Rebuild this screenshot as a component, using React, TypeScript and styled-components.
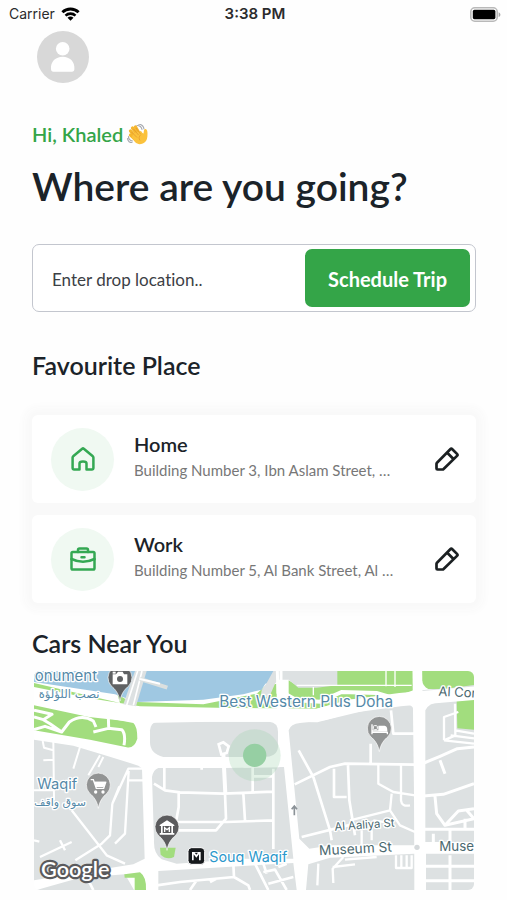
import React from "react";
import styled, { createGlobalStyle } from "styled-components";

const GlobalStyle = createGlobalStyle`
  *, *::before, *::after { box-sizing: border-box; }
  body {
    margin: 0;
    background: #fefefe;
    color: #1b2329;
    font-family: Lato, "Liberation Sans", sans-serif;
    font-variant-ligatures: no-common-ligatures;
  }
  h1, h2, h3, p, ul { margin: 0; padding: 0; }
  button, input { font-family: inherit; font-variant-ligatures: inherit; }
`;

const Screen = styled.div`
  min-height: 100vh;
`;

const StatusBar = styled.header`
  display: grid;
  grid-template-columns: 1fr auto 1fr;
  align-items: center;
  height: 28px;
  padding: 0 6px 0 9px;
  font: 400 14px/20px Inter, Roboto, sans-serif;
  color: #2b2b2d;
`;

const StatusGroup = styled.div<{ $end?: boolean }>`
  display: flex;
  align-items: center;
  justify-content: ${(p) => (p.$end ? "flex-end" : "flex-start")};
  gap: 6px;
`;

const Clock = styled.time`
  font-size: 15px;
  font-weight: 600;
`;

const Content = styled.main`
  display: flex;
  flex-direction: column;
  padding: 3px 31px 8px 32px;
`;

const AvatarButton = styled.button`
  align-self: flex-start;
  display: block;
  width: 52px;
  height: 52px;
  margin-left: 5px;
  padding: 0;
  border: 0;
  border-radius: 50%;
  background: #d8d8d8;
  cursor: pointer;
`;

const Greeting = styled.p`
  display: flex;
  align-items: center;
  gap: 4px;
  margin-top: 39px;
  font-size: 20px;
  font-weight: 600;
  line-height: 24px;
  color: #34a548;
`;

const Headline = styled.h1`
  margin-top: 16px;
  font-size: 39px;
  font-weight: 600;
  line-height: 48px;
`;

const SearchForm = styled.form`
  display: flex;
  align-items: stretch;
  height: 68px;
  margin-top: 34px;
  padding: 4px 5px 4px 0;
  border: 1px solid #c3c6ce;
  border-radius: 7px;
  background: #fff;
`;

const DropInput = styled.input`
  flex: 1;
  min-width: 0;
  padding: 2px 20px 0 19px;
  border: 0;
  outline: 0;
  background: transparent;
  font-size: 17px;
  color: #1b2329;
  &::placeholder { color: #3c4045; opacity: 1; }
`;

const TripButton = styled.button`
  flex: none;
  padding: 2px 23px 0;
  border: 0;
  border-radius: 7px;
  background: #34a548;
  color: #fff;
  font-size: 20px;
  font-weight: 700;
  cursor: pointer;
`;

const SectionTitle = styled.h2<{ $top: number }>`
  margin-top: ${(p) => p.$top}px;
  font-size: 25px;
  font-weight: 600;
  line-height: 28px;
`;

const PlaceList = styled.ul`
  display: flex;
  flex-direction: column;
  gap: 12px;
  margin-top: 36px;
  border-radius: 6px;
  list-style: none;
  background: #f9f9f9;
  box-shadow: 0 0 8px 8px #f9f9f9;
`;

const PlaceCard = styled.li`
  display: flex;
  align-items: center;
  height: 88px;
  padding: 0 15px 0 19px;
  border-radius: 6px;
  background: #fff;
`;

const PlaceBadge = styled.span`
  flex: none;
  display: grid;
  place-items: center;
  width: 63px;
  height: 63px;
  border-radius: 50%;
  background: #f0f9f2;
`;

const PlaceText = styled.div`
  flex: 1;
  min-width: 0;
  margin: 0 24px 0 20px;
  padding-bottom: 6px;
`;

const PlaceName = styled.h3`
  font-size: 20px;
  font-weight: 600;
  line-height: 28px;
`;

const PlaceAddress = styled.p`
  font-size: 15px;
  line-height: 24px;
  color: #777;
  white-space: nowrap;
  overflow: hidden;
  text-overflow: ellipsis;
`;

const EditButton = styled.button`
  flex: none;
  display: grid;
  place-items: center;
  width: 28px;
  height: 28px;
  padding: 0;
  border: 0;
  background: transparent;
  color: #1b2022;
  cursor: pointer;
`;

const MapFrame = styled.div`
  margin: 14px 2px 0;
  border-radius: 6px;
  overflow: hidden;
  background: #fff;
`;

const MapDrawing = styled.svg`
  display: block;
  width: 100%;
  height: auto;
  font-family: Inter, Roboto, sans-serif;
`;

const MapLabel = styled.text<{ $tone?: "place" | "street" | "transit" }>`
  fill: ${(p) =>
    p.$tone === "street" ? "#4b6970" : p.$tone === "transit" ? "#2b98cc" : "#5489a8"};
  stroke: #fff;
  stroke-width: 8px;
  stroke-linejoin: round;
  paint-order: stroke;
`;

const WifiIcon = () => (
  <svg width="19" height="14" viewBox="0 0 19 14" aria-label="Wi-Fi">
    <path d="M1.4 5.2a11.7 11.7 0 0 1 16.2 0" fill="none" stroke="#000" strokeWidth="2.9" />
    <path d="M4.5 8.6a7.3 7.3 0 0 1 10 0" fill="none" stroke="#000" strokeWidth="2.6" />
    <path d="M9.5 13.8 6.5 10.8a4.4 4.4 0 0 1 6 0Z" fill="#000" />
  </svg>
);

const BatteryIcon = () => (
  <svg width="31" height="15" viewBox="0 0 31 15" aria-label="Battery full">
    <rect x="0.8" y="0.8" width="26.4" height="13.4" rx="4" fill="#fff" stroke="#b9b9b9" strokeWidth="1.6" />
    <rect x="2.8" y="2.8" width="22.6" height="9.4" rx="1.6" fill="#000" />
    <path d="M28.6 5.2c2.4.8 2.4 4 0 4.8Z" fill="#a9a9a9" />
  </svg>
);

const PersonIcon = () => (
  <svg width="52" height="52" viewBox="0 0 52 52" aria-hidden="true">
    <circle cx="25.7" cy="17.8" r="6.8" fill="#fff" />
    <path d="M14 38c-.6-7.400 4.600-12.300 11.700-12.300S38 30.600 37.400 38c-.1 2-.9 2.700-2.400 2.700H16.400c-1.500 0-2.300-.7-2.400-2.700Z" fill="#fff" />
  </svg>
);

const WaveIcon = () => (
  <svg width="21" height="21" viewBox="0 0 42 42" role="img" aria-label="Waving hand">
    <path d="M20 3c5 0 9 3 10 8M23 0c7 1 10 4 11 10M3 25c0 5 3 8 8 9M1 29c1 5 4 8 9 8" fill="none" stroke="#a6a9af" strokeWidth="2.300" strokeLinecap="round" />
    <g stroke="#f5b62e" strokeLinecap="round" strokeWidth="6.500">
      <path d="M22 23 11 8" /><path d="M25 20 17 6" /><path d="M18 27 7 14" /><path d="M17 31 7 22" />
    </g>
    <path d="M14 18 28 14c2 3 3 5 5 5 1-4 0-8 3-9 4-1 5 4 5 9 0 9-1 14-6 18-7 5-14 4-19-1L9 27Z" fill="#fbc23c" />
    <path d="M13 10 23 22M18 8l9 12M9 16l11 11" stroke="#dd922c" strokeWidth="1.300" />
    <path d="M28 21c-4 3-5 8-2 12" fill="none" stroke="#e59c2c" strokeWidth="1.500" />
  </svg>
);

const HomeIcon = () => (
  <svg width="24" height="24" viewBox="0 0 24 24" fill="none" stroke="#34a853" strokeWidth="2.500" strokeLinejoin="round" strokeLinecap="round" aria-hidden="true">
    <path d="M1.600 10.600Q1.600 9.900 2.200 9.300L11.200 1.700Q12 1.100 12.800 1.700L21.800 9.300Q22.400 9.900 22.400 10.600V21.200Q22.400 22.400 21.200 22.400H15.500V16.500Q15.500 14.500 12 14.500T8.500 16.500V22.400H2.800Q1.600 22.400 1.600 21.200Z" />
  </svg>
);

const WorkIcon = () => (
  <svg width="26" height="24" viewBox="0 0 26 24" fill="none" stroke="#34a853" strokeWidth="2.500" strokeLinejoin="round" strokeLinecap="round" aria-hidden="true">
    <rect x="1.500" y="5" width="23" height="17.500" rx="1.300" />
    <path d="M8 5V3Q8 1.500 9.500 1.500H16.500Q18 1.500 18 3V5M1.500 12Q13 17.500 24.500 12M11.500 10.300H14.500" />
  </svg>
);

const PencilIcon = () => (
  <svg width="24" height="24" viewBox="0 0 24 24" fill="none" stroke="currentColor" strokeWidth="2.700" strokeLinejoin="round" aria-hidden="true">
    <path d="M1.500 16.800Q1.500 16.200 2 15.700L15.300 2.200Q16.300 1.200 17.300 2.200L22 6.900Q23 7.900 22 8.900L8.600 22Q8.100 22.500 7.500 22.500H2.500Q1.500 22.500 1.500 21.500ZM12 5.500 18.700 12.200" />
  </svg>
);

const MapPin = ({ x, y, color, children }: { x: number; y: number; color: string; children: React.ReactNode }) => (
  <g transform={`translate(${x} ${y})`}>
    <path d="M0 68C-4 45-14 33-27 22A36 36 0 1 1 27 22C14 33 4 45 0 68Z" fill={color} stroke="#fff" strokeWidth="2" />
    {children}
  </g>
);

/* Filled city blocks; the streets are the white gaps and strokes between them. */
const BLOCKS = [
  "M12 218 130 236 215 262 300 288 325 296 336 304 344 575 310 592 240 603 12 640Z",
  "M20 669 70 655 150 632 285 622 312 669Z",
  "M380 164H718Q744 166 744 195V240Q742 270 700 270H400Q360 260 360 225V190Q362 168 380 164Z",
  "M385 303H585L762 300 790 575 640 575 440 590 395 577Q370 560 372 520L366 330Q370 308 385 303Z",
  "M385 612 450 608 790 588 800 669H385Z",
  "M776 190Q782 170 810 168L885 160 1040 122 1105 112Q1145 105 1153 130V535H905L838 545 808 515Z",
  "M835 592 900 572 1153 560V669H828Z",
  "M1186 130Q1196 108 1230 106L1332 90V525H1186Z",
  "M1188 560H1332V669H1188Z",
  "M1176 70 1332 52V90L1186 104Z",
];

const PARKS = [
  "M12 48 270 108 262 82 300 104 520 112 680 80 705 58 740 50V125L690 125 330 118 180 94 12 60Z",
  "M12 110 310 168Q322 178 322 215Q312 246 290 241L180 218 12 190Z",
  "M776 40 800 55H920V12H1150V70L1110 84 960 98 860 125H776Z",
  "M1176 12H1332V54L1240 66H1195Q1178 58 1176 40Z",
  "M1280 102 1332 96V188L1282 184Z",
  "M390 542 437 542 432 570Q410 580 392 563Z",
  "M283 622 330 616Q350 630 348 669H314V632L284 632Z",
];

const ROADS: [number, string][] = [
  [9, "M12 150 40 158 60 170 95 195 118 165Q155 140 190 162L198 180M40 158 66 142 12 130M12 188 45 178 95 195M235 150 236 180M190 195 235 184 275 188Q288 200 282 235"],
  [6, "M38 222 42 242 70 250M70 225 72 400M150 240 130 305M40 280 72 278M210 265 175 325M12 370H72M220 270 205 300"],
  [7, "M125 430 230 565 285 590M125 525 30 570M12 520 28 524M90 520 105 550M136 580 215 530 240 505 247 410 295 305H340M292 340H342M296 312 285 500 255 530M247 410 268 358"],
  [8, "M403 302V370M372 350 405 370 450 376 580 380 730 374M446 376V420L438 465M585 380 588 455 558 490H442M440 465H590L732 460M640 380 645 460M730 305V546M668 300V376M668 328H728M515 296V308"],
  [12, "M580 260 586 380M388 288 585 295M748 295 640 296"],
  [8, "M794 352 900 300 945 290 1155 293M1022 230V290M1083 130 1090 200H1155M912 305V390H950M954 295 958 400 975 505M850 330 806 250M850 330 900 490 905 520M815 510 975 470"],
  [7, "M1045 293V350L1090 375 1155 385M1113 293V400Q1115 420 1140 415M1085 380 1080 430 960 460M1080 430 1110 475 1155 495M995 490V535M1030 460 1090 470"],
  [9, "M1182 288 1230 268 1282 245 1332 240M1180 387 1240 382 1332 350M1215 388 1220 440 1245 475 1332 455M1182 487H1332M1230 280 1245 320M1245 475 1285 432 1332 425M1310 430 1332 455M1260 487V535M1305 455V490"],
  [7, "M1242 220V150L1285 135M1275 110 1276 205L1242 220M1242 220 1332 230M1275 190 1332 200M1262 205 1332 214"],
  [9, "M1182 598H1332M1182 641H1332M1260 565V669M1210 500V530"],
  [7, "M1098 565V603H1145V565M1114 565V603M1130 565V603M940 570 908 605 910 648M908 600 975 592M945 578 1040 570M865 590 862 655M1025 520V490"],
  [8, "M610 590 612 630 450 645 380 655M612 630 655 655 660 669M675 590 715 669M700 615 735 608 770 669M715 650 790 630M745 600 770 590M500 640 480 669M560 635 540 645M170 630 190 669M700 590 710 620"],
  [4, "M800 55H1145M1068 12V58M1095 12V60M850 60V85"],
];

const CityMap = () => (
  <MapDrawing viewBox="12 12 1320 657" role="img" aria-label="Map of cars near Souq Waqif">
    <rect x="12" y="12" width="1320" height="657" fill="#fff" />
    {BLOCKS.map((d) => <path key={d} d={d} fill="#dde1e2" />)}
    {PARKS.map((d) => <path key={d} d={d} fill="#a2dd7e" />)}
    <path d="M12 12H740V44L706 50 695 68 640 82 520 98 320 105 255 82 12 45Z" fill="#9fc8e2" />
    <path d="M315 12H350L318 118 280 112Z" fill="#dde1e2" />
    <path d="M730 12H922V55L860 62H805L776 38H745L735 50 720 85 690 100 695 70 710 48Z" fill="#dde1e2" />
    <path d="M323 12 290 115M336 12 310 115" stroke="#fff" strokeWidth="5" />
    <path d="M330 36 412 62" stroke="#dbe0df" strokeWidth="12" />
    <path d="M330 36 390 50" stroke="#fff" strokeWidth="6" />
    <path d="M12 94 180 130 340 148 540 144 750 144 860 146 960 118 1110 98 1340 78" fill="none" stroke="#fff" strokeWidth="40" />
    <path d="M753 12V160M742 12 744 80" stroke="#fff" strokeWidth="9" />
    <path d="M765 80 800 100 870 104 935 75 1040 78 1080 90" fill="none" stroke="#fff" strokeWidth="12" />
    <path d="M1162 12 1170 669" stroke="#fff" strokeWidth="29" />
    <g fill="none" stroke="#fff" strokeLinejoin="round">
      {ROADS.map(([width, d]) => <path key={d} d={d} strokeWidth={width} />)}
    </g>
    <path d="M566 232 580 226 596 238 590 258 574 262Z" fill="#dde1e2" stroke="#fff" strokeWidth="8" />
    <circle cx="1161" cy="541" r="8" fill="#d5d9db" />
    <path d="M793 445V419M785 427 793 417 801 427" fill="none" stroke="#8b9297" strokeWidth="5" />
    <circle cx="674" cy="265" r="78" fill="#9bd0a8" fillOpacity="0.280" />
    <circle cx="674" cy="265" r="35" fill="#96cfa3" />

    <MapLabel x="14" y="41" fontSize="45">onument</MapLabel>
    <MapLabel x="26" y="92" fontSize="35" fontFamily="DejaVu Sans">نصب اللؤلؤة</MapLabel>
    <MapLabel x="568" y="121" fontSize="46">Best Western Plus Doha</MapLabel>
    <MapLabel x="22" y="367" fontSize="44">Waqif</MapLabel>
    <MapLabel x="12" y="418" fontSize="33" fontFamily="DejaVu Sans">سوق واقف</MapLabel>
    <MapLabel $tone="transit" x="538" y="584" fontSize="43">Souq Waqif</MapLabel>
    <MapLabel $tone="street" x="1225" y="86" fontSize="39" transform="rotate(3 1225 86)">Al Cor</MapLabel>
    <MapLabel $tone="street" x="914" y="491" fontSize="34" transform="rotate(-4 914 491)">Al Aaliya St</MapLabel>
    <MapLabel $tone="street" x="868" y="565" fontSize="41" transform="rotate(-3 868 565)">Museum St</MapLabel>
    <MapLabel $tone="street" x="1228" y="551" fontSize="40">Muse</MapLabel>

    <MapPin x={270} y={34} color="#5f6163">
      <path d="M-22-12H-12L-6-20H8L12-12H22V18H-22Z" fill="#fff" />
      <circle cx="0" cy="2" r="9" fill="#5f6163" />
      <rect x="-22" y="-20" width="9" height="6" fill="#fff" />
    </MapPin>
    <MapPin x={1048} y={186} color="#929494">
      <path d="M-22-14V16M-22 10H24V16" fill="none" stroke="#fff" strokeWidth="4" />
      <rect x="-18" y="-10" width="12" height="12" rx="3" fill="none" stroke="#fff" strokeWidth="3" />
      <path d="M-3 4V-10H16Q24-9 24 4V8H-22V4Z" fill="#fff" />
    </MapPin>
    <MapPin x={205} y={356} color="#929494">
      <path d="M-23-18H-15L-6 8H16L22-10H-12" fill="none" stroke="#fff" strokeWidth="4" />
      <path d="M-12-12H23L16 4H-7Z" fill="#fff" />
      <circle cx="-8" cy="19" r="5" fill="#fff" /><circle cx="14" cy="19" r="5" fill="#fff" />
    </MapPin>
    <MapPin x={411} y={482} color="#5b5b5d">
      <path d="M-22-8 0-22 22-8V-5H-22ZM-18-5H-13V16H-18ZM13-5H18V16H13ZM-22 16H22V21H-22Z" fill="#fff" />
      <path d="M-7 13V0L0 6 7 0V13" fill="none" stroke="#fff" strokeWidth="4" />
    </MapPin>
    <rect x="474" y="542" width="50" height="50" rx="11" fill="#16191c" stroke="#fff" strokeWidth="3" />
    <path d="M486 580V555H512V580H507V562L499 572 491 562V580Z" fill="#fff" />
    <path d="M494 557 499 563 504 557" fill="#16191c" />
    <text x="33" y="629" fontSize="65" fontFamily="Lato" fontWeight="600" fill="#fff" stroke="#5a5a5c" strokeWidth="13" strokeLinejoin="round" paintOrder="stroke">Google</text>
  </MapDrawing>
);

const places = [
  { name: "Home", address: "Building Number 3, Ibn Aslam Street, …", icon: <HomeIcon /> },
  { name: "Work", address: "Building Number 5, Al Bank Street, Al …", icon: <WorkIcon /> },
];

export default function App() {
  return (
    <Screen>
      <GlobalStyle />
      <StatusBar>
        <StatusGroup>Carrier <WifiIcon /></StatusGroup>
        <Clock>3:38 PM</Clock>
        <StatusGroup $end><BatteryIcon /></StatusGroup>
      </StatusBar>
      <Content>
        <AvatarButton type="button" aria-label="Profile"><PersonIcon /></AvatarButton>
        <Greeting>Hi, Khaled <WaveIcon /></Greeting>
        <Headline>Where are you going?</Headline>
        <SearchForm onSubmit={(e) => e.preventDefault()}>
          <DropInput type="text" aria-label="Drop location" placeholder="Enter drop location.." />
          <TripButton type="submit">Schedule Trip</TripButton>
        </SearchForm>
        <SectionTitle $top={39}>Favourite Place</SectionTitle>
        <PlaceList>
          {places.map((place) => (
            <PlaceCard key={place.name}>
              <PlaceBadge>{place.icon}</PlaceBadge>
              <PlaceText>
                <PlaceName>{place.name}</PlaceName>
                <PlaceAddress>{place.address}</PlaceAddress>
              </PlaceText>
              <EditButton type="button" aria-label={`Edit ${place.name}`}><PencilIcon /></EditButton>
            </PlaceCard>
          ))}
        </PlaceList>
        <SectionTitle $top={26}>Cars Near You</SectionTitle>
        <MapFrame><CityMap /></MapFrame>
      </Content>
    </Screen>
  );
}
